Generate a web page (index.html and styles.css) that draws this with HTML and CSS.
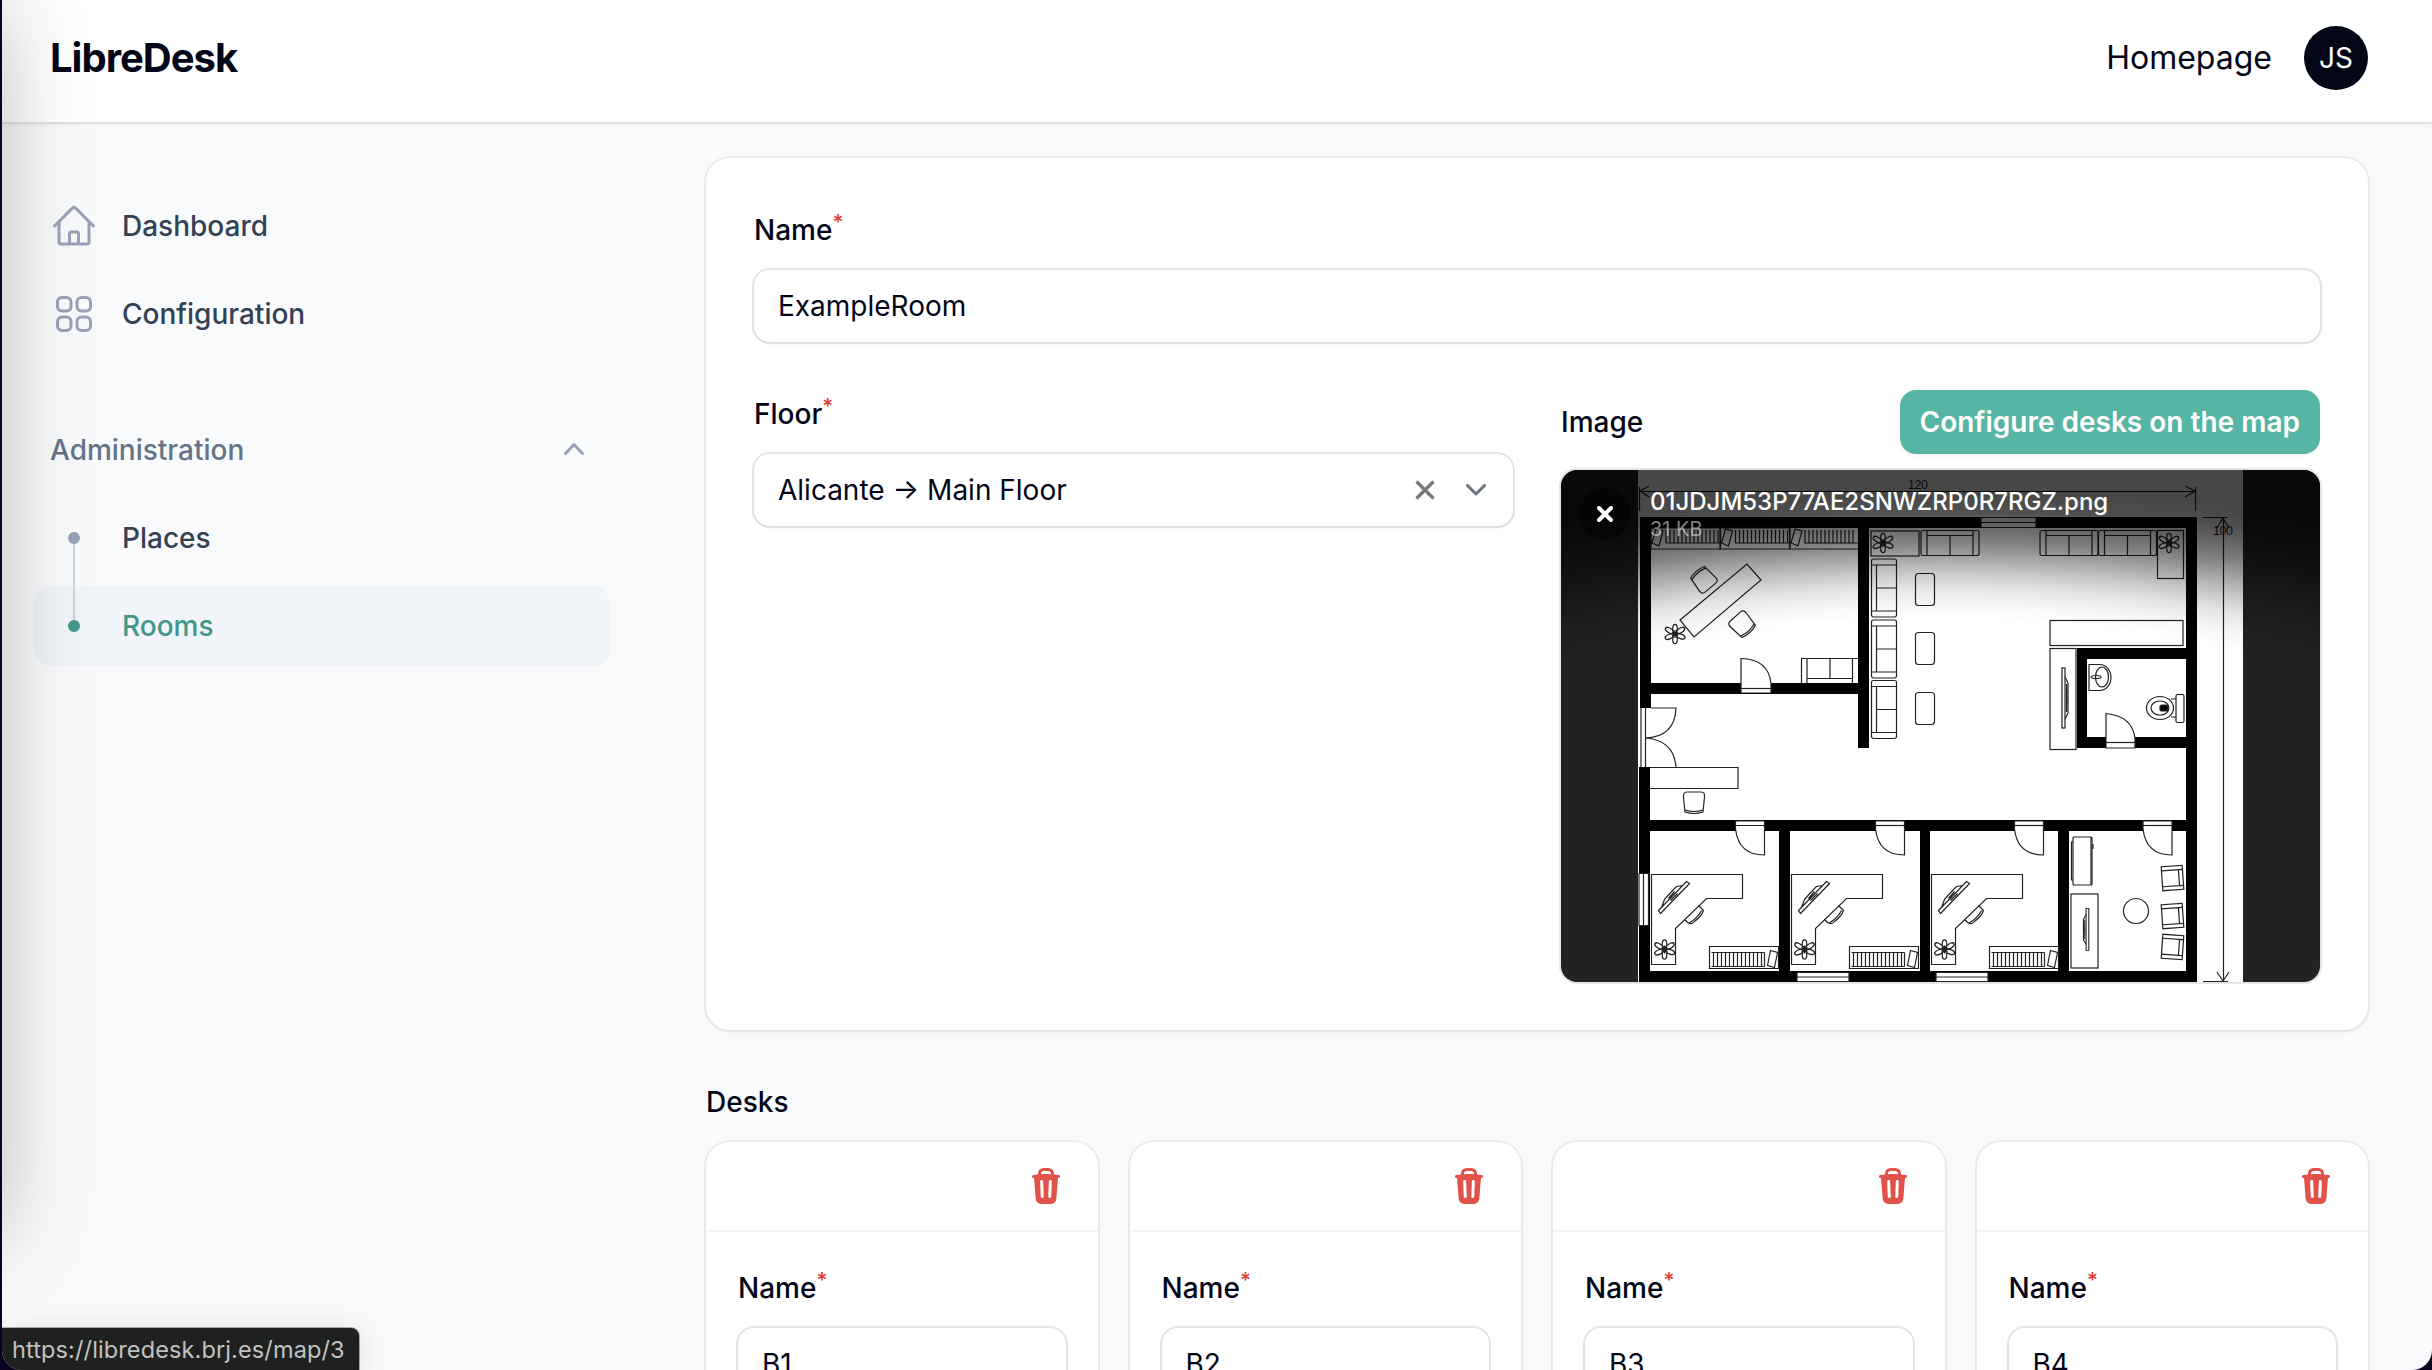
FILE: index.html
```html
<!DOCTYPE html>
<html lang="en">
<head>
<meta charset="utf-8">
<title>LibreDesk</title>
<link rel="stylesheet" href="styles.css">
</head>
<body>
<svg class="defs" aria-hidden="true">
  <symbol id="trash" viewBox="0 0 20 20"><path fill-rule="evenodd" d="M8.75 1A2.75 2.75 0 006 3.75v.443c-.795.077-1.584.176-2.365.298a.75.75 0 10.23 1.482l.149-.022.841 10.518A2.75 2.75 0 007.596 19h4.807a2.75 2.75 0 002.742-2.53l.841-10.52.149.023a.75.75 0 00.23-1.482A41.03 41.03 0 0014 4.193V3.75A2.75 2.75 0 0011.25 1h-2.5zM10 4c.84 0 1.673.025 2.5.075V3.75c0-.69-.56-1.25-1.25-1.25h-2.5c-.69 0-1.25.56-1.25 1.25v.325C8.327 4.025 9.16 4 10 4zM8.58 7.72a.75.75 0 00-1.5.06l.3 7.5a.75.75 0 101.5-.06l-.3-7.5zm4.34.06a.75.75 0 10-1.5-.06l-.3 7.5a.75.75 0 101.5.06l.3-7.5z"/></symbol>
</svg>
<div class="window">
  <header class="topbar">
    <div class="brand">LibreDesk</div>
    <div class="topbar-end">
      <a class="home-link">Homepage</a>
      <div class="avatar">JS</div>
    </div>
  </header>
  <div class="layout">
    <nav class="sidebar">
      <a class="nav-item">
        <svg class="nav-icon" viewBox="0 0 24 24"><path d="m2.25 12 8.954-8.955c.44-.439 1.152-.439 1.591 0L21.75 12M4.5 9.75v10.125c0 .621.504 1.125 1.125 1.125H9.75v-4.875c0-.621.504-1.125 1.125-1.125h2.25c.621 0 1.125.504 1.125 1.125V21h4.125c.621 0 1.125-.504 1.125-1.125V9.75M8.25 21h8.25"/></svg>
        <span>Dashboard</span>
      </a>
      <a class="nav-item">
        <svg class="nav-icon" viewBox="0 0 24 24"><path d="M3.75 6A2.25 2.25 0 0 1 6 3.75h2.25A2.25 2.25 0 0 1 10.5 6v2.25a2.25 2.25 0 0 1-2.25 2.25H6a2.25 2.25 0 0 1-2.25-2.25V6ZM3.75 15.75A2.25 2.25 0 0 1 6 13.5h2.25a2.25 2.25 0 0 1 2.25 2.25V18a2.25 2.25 0 0 1-2.25 2.25H6A2.25 2.25 0 0 1 3.75 18v-2.25ZM13.5 6a2.25 2.25 0 0 1 2.25-2.25H18A2.25 2.25 0 0 1 20.25 6v2.25A2.25 2.25 0 0 1 18 10.5h-2.25a2.25 2.25 0 0 1-2.25-2.25V6ZM13.5 15.75a2.25 2.25 0 0 1 2.25-2.25H18a2.25 2.25 0 0 1 2.25 2.25V18A2.25 2.25 0 0 1 18 20.25h-2.25A2.25 2.25 0 0 1 13.5 18v-2.25Z"/></svg>
        <span>Configuration</span>
      </a>
      <div class="nav-group">
        <span>Administration</span>
        <svg class="nav-chevron" viewBox="0 0 20 20"><path d="M14.77 12.79a.75.75 0 01-1.06-.02L10 8.832 6.29 12.77a.75.75 0 11-1.08-1.04l4.25-4.5a.75.75 0 011.08 0l4.25 4.5a.75.75 0 01-.02 1.06z"/></svg>
      </div>
      <a class="nav-item">
        <span class="dot-cell first"><i class="dot"></i></span>
        <span>Places</span>
      </a>
      <a class="nav-item active">
        <span class="dot-cell last"><i class="dot"></i></span>
        <span>Rooms</span>
      </a>
    </nav>
    <main class="main">
      <section class="card form-card">
        <div class="field">
          <div class="label">Name<sup>*</sup></div>
          <div class="input">ExampleRoom</div>
        </div>
        <div class="columns">
          <div class="field">
            <div class="label">Floor<sup>*</sup></div>
            <div class="input select">
              <span class="value">Alicante → Main Floor</span>
              <svg class="clear" viewBox="0 0 20 20"><path d="M1.5 1.5 18.5 18.5M18.5 1.5 1.5 18.5"/></svg>
              <svg class="caret" viewBox="0 0 20 12"><path d="M1.5 1.5 10 10 18.5 1.5"/></svg>
            </div>
          </div>
          <div class="image-field">
            <div class="image-head">
              <div class="label">Image</div>
              <button class="button">Configure desks on the map</button>
            </div>
            <div class="upload">
              <svg class="plan" viewBox="1561 470 759 512">
                <defs>
                  <radialGradient id="fade" cx=".5" cy="1.25" r="1.15">
                    <stop offset=".5" stop-color="#000"/><stop offset=".56" stop-color="#0a0a0a"/><stop offset=".63" stop-color="#262626"/><stop offset=".69" stop-color="#4f4f4f"/><stop offset=".75" stop-color="#808080"/><stop offset=".81" stop-color="#b1b1b1"/><stop offset=".88" stop-color="#dadada"/><stop offset=".94" stop-color="#f6f6f6"/><stop offset="1" stop-color="#fff"/>
                  </radialGradient>
                  <mask id="fade-mask"><rect x="1561" y="470" width="759" height="224" fill="url(#fade)"/></mask>
                  <g id="plant">
                    <g id="petal"><ellipse cx="0" cy="-5.500" rx="2.300" ry="4.200"/></g>
                    <use href="#petal" transform="rotate(58) scale(1 1.15)"/><use href="#petal" transform="rotate(112) scale(1 1.1)"/><use href="#petal" transform="rotate(180)"/><use href="#petal" transform="rotate(245) scale(1 1.1)"/><use href="#petal" transform="rotate(302) scale(1 1.15)"/><path d="M-3-2 3 2M-3 2 3-2M0-4V4"/>
                  </g>
                  <g id="sofa">
                    <rect x="0" y="0" width="58" height="25" rx="2"/><path d="M6 0V25M52 0V25M6 5H52M29 5V25"/>
                  </g>
                  <g id="chair"><path d="M-7-10H7Q11-10 10.5-5L9 10Q0 13-9 10L-10.5-5Q-11-10-7-10ZM-9 8Q0 11 9 8"/></g>
                  <g id="armchair"><rect x="-11" y="-12" width="21" height="24"/><path d="M-11-8H10M-11 8H10M6-8V8"/></g>
                  <g id="books"><path d="M0 0H69V22H0Z"/><path d="M4 6V20M8 6V20M12 6V20M16 6V20M20 6V20M24 6V20M28 6V20M32 6V20M36 6V20M40 6V20M44 6V20M48 6V20M52 6V20M55 6V20"/><path d="M2 6H55M2 20H55M61 4 68 6 65 21 58 19Z"/></g>
                  <g id="shelf"><path d="M0 0H69V21H0ZM1 15 5 1 12 3 8 18Z"/><path d="M15 2V15M19 2V15M23 2V15M27 2V15M31 2V15M35 2V15M39 2V15M43 2V15M47 2V15M51 2V15M55 2V15M59 2V15M63 2V15M67 2V15M15 15H69"/></g>
                  <g id="tv"><rect x="-2" y="-30" width="3" height="60"/><path d="M1-21 4-15V15L1 21M2.500-14V14"/><path d="M2-7H4M2-4H4M2-1H4M2 2H4M2 5H4"/></g>
                  <g id="office">
                    <path d="M0 0H91V24H55L24 54V90H0Z"/>
                    <path d="M7 36 35 7 38 9 9 39ZM10 33 13 25Q20 17 25 12L31 11M17 24 23 17M19 26 26 19"/>
                    <path d="M33 45 Q39 52 43 47Q50 42 52 36L47 31M37 49Q46 44 50 36"/>
                    <use href="#plant" x="13" y="75"/>
                    <use href="#books" x="58" y="72"/>
                  </g>
                  <g id="door"><path d="M0 8Q3 34 29 34V0H0Z" fill="#fff"/><path d="M0 4.500H29"/></g>
                </defs>
                <rect x="1638" y="470" width="605" height="512" fill="#fff"/>
                <g class="walls">
                  <path d="M1640 517H2197V982H2186V528H1651V708H1640ZM1640 683H1858V694H1651V708H1640ZM1858 528H1869V748H1858ZM1639 767H1650V982H1639ZM1640 820H2190V831H1640ZM1639 971H2197V982H1639ZM1779 831H1790V971H1779ZM1920 831H1930V971H1920ZM2058 831H2069V971H2058ZM2077 648H2186V659H2087V737H2186V748H2077Z"/>
                </g>
                <g class="lines">
                  <path d="M1639.500 487V511M1640 491.500H2196M1649 486 1640 491 1649 497M2195.500 487V511M2185 486 2195 491 2185 497M2203 517.500H2228M2203 981.500H2228M2223.500 518V981M2217 528 2223 518 2229 528M2217 972 2223 981 2229 972"/>
                  <path d="M1641 708V767M1645.500 708V767M1651 708H1676Q1675 737 1645 738Q1674 740 1676 767"/>
                  <path d="M1650 767.500H1738V788.500H1650"/>
                  <use href="#chair" x="1694" y="802"/>
                  <use href="#shelf" x="1651" y="528"/><use href="#shelf" x="1720.500" y="528"/><path d="M1790 528V549H1858M1791 543 1795 529 1802 531 1798 546ZM1805 530V543M1809 530V543M1813 530V543M1817 530V543M1821 530V543M1825 530V543M1829 530V543M1833 530V543M1837 530V543M1841 530V543M1845 530V543M1849 530V543M1853 530V543M1804 543H1858"/>
                  <path d="M1680 620 1747 564 1761 580 1694 637Z"/>
                  <use href="#chair" transform="translate(1704 580) rotate(140)"/>
                  <use href="#chair" transform="translate(1742 624) rotate(-42)"/>
                  <use href="#plant" x="1675" y="634"/>
                  <path d="M1801.500 683V659Q1801 658 1804 658.500H1858M1807 659V683M1852.500 659V683M1807 678.500H1852M1830 659V678"/>
                  <path d="M1741 683V658.500Q1768 659 1771 683V693H1741Z" fill="#fff"/><path d="M1741 688.500H1771"/>
                  <rect x="1871" y="531" width="48" height="25"/><use href="#plant" x="1883" y="543"/>
                  <use href="#sofa" x="1921" y="530.500"/><use href="#sofa" x="2040" y="530.500"/><use href="#sofa" x="2098.500" y="530.500"/>
                  <rect x="2157.500" y="530.500" width="26" height="48"/><use href="#plant" x="2169" y="543"/>
                  <use href="#sofa" transform="translate(1871.500 617) rotate(-90)"/><use href="#sofa" transform="translate(1871.500 678) rotate(-90)"/><use href="#sofa" transform="translate(1871.500 738.500) rotate(-90)"/>
                  <rect x="1915.500" y="573.500" width="19" height="32" rx="3"/><rect x="1915.500" y="632.500" width="19" height="32" rx="3"/><rect x="1915.500" y="692.500" width="19" height="32" rx="3"/>
                  <rect x="2050" y="620.500" width="133" height="25"/><rect x="2050" y="648.500" width="26" height="101"/>
                  <use href="#tv" x="2064" y="698"/>
                  <path d="M2089 664.500H2100A11 13 0 0 1 2100 690.500H2089Z"/><ellipse cx="2102" cy="677" rx="6.500" ry="10"/><ellipse cx="2096" cy="677" rx="5" ry="1.500"/>
                  <ellipse cx="2160" cy="708" rx="13.500" ry="11.500"/><ellipse cx="2160" cy="708" rx="9" ry="7"/><rect x="2160" y="705" width="8" height="6" rx="2" fill="#000"/><rect x="2176" y="694.500" width="8" height="28" rx="1.500" fill="#fff"/><path d="M2171 699H2176M2171 717H2176"/>
                  <path d="M2106 748V713.500Q2132 716 2135 738V748Z" fill="#fff"/><path d="M2106 742.500H2135"/>
                  <use href="#door" x="1735.500" y="821"/><use href="#door" x="1875.500" y="821"/><use href="#door" x="2014.500" y="821"/><use href="#door" x="2143" y="821"/>
                  <use href="#office" x="1651.500" y="874.500"/><use href="#office" x="1791.500" y="874.500"/><use href="#office" x="1931.500" y="874.500"/>
                  <rect x="2073" y="837" width="19" height="48" rx="1"/><path d="M2073 842H2071.500V880H2073M2091 837V885M2093 844V849"/>
                  <rect x="2071" y="894" width="27" height="74"/><g transform="translate(2087 929.500) scale(-.9 .7)"><use href="#tv"/></g>
                  <circle cx="2136" cy="911" r="12.500"/>
                  <use href="#armchair" transform="translate(2173 878) rotate(-4)"/><use href="#armchair" transform="translate(2173 916) rotate(-4)"/><use href="#armchair" transform="translate(2173 947) rotate(4)"/>
                  <g fill="#fff"><path d="M1639 873.500H1648.500V925.500H1639ZM1981 517.500H2036V527.500H1981ZM1797 972.500H1849V981.500H1797ZM1936 972.500H1988V981.500H1936Z"/></g>
                  <path d="M1643.500 874V925M1981 522.500H2036M1797 977H1849M1936 977H1988"/>
                </g>
                <text x="1908" y="489" class="dim" textLength="20">120</text><text x="2213" y="534.500" class="dim" textLength="20">100</text>
                <rect x="1561" y="470" width="759" height="224" fill="#000" opacity=".72" mask="url(#fade-mask)"/>
              </svg>
              <div class="upload-info">
                <span class="remove"><svg viewBox="0 0 16 16"><path d="M2 2 14 14M14 2 2 14"/></svg></span>
                <div class="file"><div class="file-name">01JDJM53P77AE2SNWZRP0R7RGZ.png</div><div class="file-size">31 KB</div></div>
              </div>
            </div>
          </div>
        </div>
      </section>
      <div class="label desks-label">Desks</div>
      <div class="desks">
        <section class="card desk"><div class="desk-head"><svg class="trash"><use href="#trash"/></svg></div><div class="desk-body"><div class="label">Name<sup>*</sup></div><div class="input">B1</div></div></section>
        <section class="card desk"><div class="desk-head"><svg class="trash"><use href="#trash"/></svg></div><div class="desk-body"><div class="label">Name<sup>*</sup></div><div class="input">B2</div></div></section>
        <section class="card desk"><div class="desk-head"><svg class="trash"><use href="#trash"/></svg></div><div class="desk-body"><div class="label">Name<sup>*</sup></div><div class="input">B3</div></div></section>
        <section class="card desk"><div class="desk-head"><svg class="trash"><use href="#trash"/></svg></div><div class="desk-body"><div class="label">Name<sup>*</sup></div><div class="input">B4</div></div></section>
      </div>
    </main>
  </div>
  <div class="edge-shadow"></div>
  <div class="status">https://libredesk.brj.es/map/3</div>
</div>
</body>
</html>
```
FILE: styles.css
```css
* { box-sizing: border-box; }

body {
  margin: 0;
  width: 2432px;
  height: 1370px;
  overflow: hidden;
  padding-left: 2px;
  background: #0b0220;
  color: #020617;
  font: 400 28px/48px Inter, sans-serif;
}

.defs { position: absolute; width: 0; height: 0; }

.window {
  position: relative;
  height: 1370px;
  overflow: hidden;
  background: #f8fafc;
  border-radius: 0 0 20px 20px;
}

.topbar {
  position: relative;
  display: flex;
  align-items: center;
  justify-content: space-between;
  height: 122px;
  padding: 0 64px 6px 48px;
  background: #fff;
  box-shadow: 0 0 0 2px rgba(2, 6, 23, .05), 0 2px 4px rgba(0, 0, 0, .07);
}

.brand { font-size: 40px; font-weight: 700; letter-spacing: -1px; }
.topbar-end { display: flex; align-items: center; gap: 32px; }
.home-link { font-size: 32px; }

.avatar {
  width: 64px;
  height: 64px;
  border-radius: 50%;
  background: #020617;
  color: #fff;
  line-height: 64px;
  text-align: center;
}

.layout { display: flex; }

.sidebar {
  display: flex;
  flex-direction: column;
  gap: 8px;
  width: 640px;
  padding: 64px 32px 0;
  font-weight: 500;
  color: #334155;
}

.nav-item {
  display: flex;
  align-items: center;
  gap: 24px;
  height: 80px;
  padding: 0 16px;
  border-radius: 16px;
}
.nav-item.active { background: #f1f5f9; color: #43978a; }

.nav-icon {
  width: 48px;
  height: 48px;
  fill: none;
  stroke: #98a2b8;
  stroke-width: 1.5;
  stroke-linecap: round;
  stroke-linejoin: round;
}

.nav-group {
  display: flex;
  align-items: center;
  justify-content: space-between;
  height: 80px;
  margin-top: 48px;
  padding: 0 16px;
  color: #64748b;
}
.nav-chevron { width: 40px; height: 40px; margin-bottom: 3px; fill: #98a2b8; }

.dot-cell {
  display: flex;
  flex-direction: column;
  align-items: center;
  justify-content: center;
  width: 48px;
  height: 80px;
}
.dot { width: 12px; height: 12px; flex: none; border-radius: 50%; background: #98a2b8; }
.active .dot { background: #43978a; }
.first::before, .first::after, .last::before, .last::after { content: ""; flex: 1; width: 2px; }
.first::after, .last::before { background: #cbd5e1; }
.first::after { margin-bottom: -8px; }
.first::before { margin-top: -8px; }

.main { flex: 1; padding: 36px 64px 0 64px; }

.card {
  background: #fff;
  border-radius: 24px;
  box-shadow: 0 0 0 2px rgba(2, 6, 23, .05), 0 2px 4px rgba(0, 0, 0, .05);
}

.form-card { display: flex; flex-direction: column; gap: 48px; padding: 48px; }
.columns { display: grid; grid-template-columns: 1fr 1fr; gap: 48px; }
.label { font-weight: 500; margin-bottom: 16px; }
.label sup { color: #dc3a32; font-size: 21px; line-height: 0; vertical-align: baseline; position: relative; top: -.5em; }

.input {
  height: 72px;
  padding: 0 24px;
  line-height: 72px;
  border-radius: 16px;
  background: #fff;
  box-shadow: 0 0 0 2px rgba(2, 6, 23, .1), 0 2px 4px rgba(0, 0, 0, .05);
}

.select { display: flex; align-items: center; padding-right: 27px; gap: 31px; }
.value { flex: 1; }
.clear, .caret { width: 20px; fill: none; stroke-linecap: round; stroke-linejoin: round; stroke-width: 3.2; }
.clear { height: 20px; stroke: #777; stroke-linecap: butt; }
.caret { height: 12px; stroke: #6b7280; stroke-width: 3; }

.image-field { display: flex; flex-direction: column; gap: 16px; }
.image-head { display: flex; align-items: center; justify-content: space-between; }
.image-head .label { margin: 0; }

.button {
  height: 64px;
  padding: 0 20px;
  border: 0;
  border-radius: 16px;
  background: #57b5a5;
  color: #fff;
  font: 600 28px/48px Inter, sans-serif;
  box-shadow: 0 2px 4px rgba(0, 0, 0, .05);
}

.upload {
  position: relative;
  height: 512px;
  border-radius: 16px;
  overflow: hidden;
  background: #222;
  outline: 2px solid rgba(2, 6, 23, .1);
}
.plan { display: block; width: 759px; height: 512px; }
.walls { fill: #000; }
.lines { fill: none; stroke: #222; stroke-width: 1.2; }
.dim { font: 400 12.5px "Liberation Sans", sans-serif; fill: #222; }

.upload-info {
  position: absolute;
  inset: 0;
  display: flex;
  align-items: flex-start;
  gap: 19px;
  padding: 18px;
}
.remove {
  display: flex;
  align-items: center;
  justify-content: center;
  width: 52px;
  height: 52px;
  border-radius: 50%;
  background: rgba(0, 0, 0, .5);
}
.remove svg { width: 16px; height: 16px; fill: none; stroke: #fff; stroke-width: 4; stroke-linecap: round; }
.file { color: #fff; }
.file-name { font-size: 24px; font-weight: 500; line-height: 28px; }
.file-size { font-size: 20px; line-height: 26px; opacity: .5; }

.desks-label { margin: 48px 0 16px; }
.desks { display: grid; grid-template-columns: repeat(4, 1fr); gap: 32px; }
.desk { height: 320px; }
.desk-head {
  display: flex;
  align-items: center;
  justify-content: flex-end;
  height: 90px;
  padding: 0 32px;
  border-bottom: 2px solid #f1f5f9;
}
.trash { width: 40px; height: 40px; fill: #e0524a; }
.desk-body { padding: 32px; }

.edge-shadow {
  position: absolute;
  left: -200px;
  top: 0;
  width: 200px;
  height: 1240px;
  border-radius: 20px;
  box-shadow: 0 0 90px rgba(0, 0, 0, .25);
}

.status {
  position: absolute;
  left: 0;
  bottom: 0;
  width: 357px;
  height: 42px;
  padding-left: 10px;
  border-radius: 0 8px 0 10px;
  background: #1f2120;
  color: #c2c2c2;
  font-size: 23.5px;
  letter-spacing: .12px;
  line-height: 43px;
  white-space: nowrap;
  box-shadow: 0 0 0 1px rgba(0, 0, 0, .3), 0 4px 30px rgba(0, 0, 0, .12);
}
```
